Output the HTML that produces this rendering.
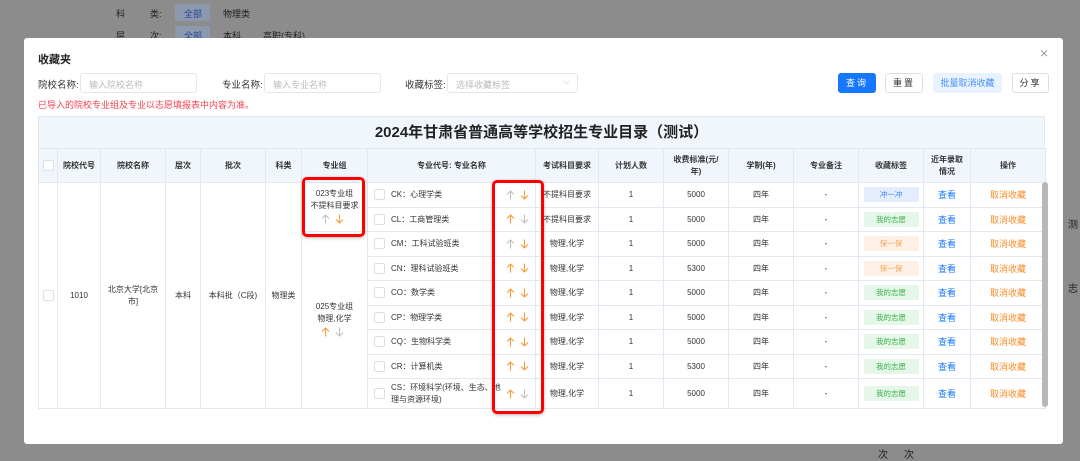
<!DOCTYPE html>
<html><head><meta charset="utf-8"><style>
*{margin:0;padding:0;box-sizing:border-box}
body{width:1080px;height:461px;overflow:hidden;background:#8c8c8c;font-family:"Liberation Sans","Noto Sans CJK SC",sans-serif;position:relative;color:#333}
.a{position:absolute;white-space:nowrap}
.bg{color:#1e1e1e;font-size:9px}
.modal{position:absolute;left:24px;top:38px;width:1039px;height:406px;background:#fff;border-radius:3px}
.inp{position:absolute;height:20px;border:1px solid #e4e6eb;border-radius:3px;font-size:9px;color:#bbb;padding:4px 8px;background:#fff}
.lab{position:absolute;font-size:9.5px;color:#333}
.btn{position:absolute;height:20px;border:1px solid #dcdfe6;border-radius:3px;font-size:9px;text-align:center;line-height:18px;background:#fff;color:#333;letter-spacing:2px}
table{position:absolute;left:38px;top:148px;border-collapse:collapse;table-layout:fixed;font-size:8px;color:#333}
td,th{border:1px solid #e3e8f0;text-align:center;vertical-align:middle;padding:0}
th{background:#f1f6fd;height:34px;font-size:8px;color:#333;line-height:12px;font-weight:bold}
td{font-weight:normal;height:24.5px}
.cb{display:inline-block;width:11px;height:11px;border:1px solid #dcdfe6;border-radius:2px;vertical-align:middle;background:#fff}
.tag{display:inline-block;width:55px;height:15px;line-height:15px;font-size:7.5px}
.t1{background:#e3edfd;color:#4a8cf7}.t2{background:#e6f7e9;color:#3bb34a}.t3{background:#fdf0e4;color:#f5a35a}
.blue{color:#1677ff;font-size:9px}.org{color:#fa8c2a;font-size:9px}
.maj{text-align:left;padding-left:6px;position:relative}
.maj .cb{margin-right:6px}
.ar{position:absolute;left:138px;top:50%;transform:translateY(-50%);height:10px;line-height:0}
.ar svg,.ga svg{width:9px;height:10px;margin-right:5px;vertical-align:middle}
.ga{display:inline-block;line-height:0;margin-top:2px}
.o{stroke:#fa9a3a}.g{stroke:#c0c0c0}
.red{position:absolute;border:3px solid #f00;border-radius:5px;box-shadow:0 1px 3px rgba(0,0,0,.3)}
</style></head><body>
<svg width="0" height="0" style="position:absolute"><defs>
<symbol id="u" viewBox="0 0 9 10"><path d="M4.5 9.5V1M1 4.5L4.5 1 8 4.5" fill="none" stroke-width="1.1"/></symbol>
<symbol id="d" viewBox="0 0 9 10"><path d="M4.5 0.5V9M1 5.5L4.5 9 8 5.5" fill="none" stroke-width="1.1"/></symbol>
</defs></svg>
<div class="a bg" style="left:116px;top:7px">科&nbsp;&nbsp;&nbsp;&nbsp;&nbsp;&nbsp;&nbsp;&nbsp;&nbsp;&nbsp;类:</div>
<div class="a" style="left:175px;top:4px;width:35px;height:17px;background:#8c98ae"></div>
<div class="a bg" style="left:184px;top:7px;color:#254a90">全部</div>
<div class="a bg" style="left:223px;top:7px">物理类</div>
<div class="a bg" style="left:116px;top:29px">层&nbsp;&nbsp;&nbsp;&nbsp;&nbsp;&nbsp;&nbsp;&nbsp;&nbsp;&nbsp;次:</div>
<div class="a" style="left:175px;top:26px;width:35px;height:12px;background:#8c98ae"></div>
<div class="a bg" style="left:184px;top:29px;color:#254a90">全部</div>
<div class="a bg" style="left:223px;top:29px">本科</div>
<div class="a bg" style="left:263px;top:29px">高职(专科)</div>
<div class="a bg" style="left:1068px;top:216px;font-size:10px">测</div>
<div class="a bg" style="left:1068px;top:280px;font-size:10px">志</div>
<div class="a bg" style="left:878px;top:446px;font-size:10px">次</div>
<div class="a bg" style="left:904px;top:446px;font-size:10px">次</div>

<div class="modal"></div>
<div class="a" style="left:38px;top:51px;font-size:11px;font-weight:bold;color:#222">收藏夹</div>
<div class="a" style="left:1040px;top:45px;font-size:14px;color:#999">×</div>
<div class="lab" style="left:38px;top:77px">院校名称:</div>
<div class="inp" style="left:80px;top:73px;width:117px">输入院校名称</div>
<div class="lab" style="left:222px;top:77px">专业名称:</div>
<div class="inp" style="left:264px;top:73px;width:117px">输入专业名称</div>
<div class="lab" style="left:405px;top:77px">收藏标签:</div>
<div class="inp" style="left:447px;top:73px;width:131px">选择收藏标签<span style="position:absolute;right:7px;top:2px;color:#bbb">⌵</span></div>
<div class="btn" style="left:838px;top:73px;width:38px;background:#1677ff;border-color:#1677ff;color:#fff">查询</div>
<div class="btn" style="left:885px;top:73px;width:38px">重置</div>
<div class="btn" style="left:933px;top:73px;width:69px;background:#e8f3ff;border-color:#e8f3ff;color:#4a90f5;letter-spacing:0">批量取消收藏</div>
<div class="btn" style="left:1012px;top:73px;width:37px">分享</div>
<div class="a" style="left:38px;top:98px;font-size:9px;color:#f5414d">已导入的院校专业组及专业以志愿填报表中内容为准。</div>

<div class="a" style="left:38px;top:116px;width:1007px;height:33px;background:#f1f6fd;border:1px solid #e3e8f0;font-size:15px;font-weight:bold;color:#222;text-align:center;line-height:31px">2024年甘肃省普通高等学校招生专业目录（测试）</div>

<table>
<colgroup><col style="width:19px"><col style="width:43px"><col style="width:65px"><col style="width:35px"><col style="width:65px"><col style="width:36px"><col style="width:66px"><col style="width:168px"><col style="width:63px"><col style="width:65px"><col style="width:65px"><col style="width:65px"><col style="width:65px"><col style="width:65px"><col style="width:47px"><col style="width:75px"></colgroup>
<tr><th><span class="cb"></span></th><th>院校代号</th><th>院校名称</th><th>层次</th><th>批次</th><th>科类</th><th>专业组</th><th>专业代号: 专业名称</th><th>考试科目要求</th><th>计划人数</th><th>收费标准(元/<br>年)</th><th>学制(年)</th><th>专业备注</th><th>收藏标签</th><th>近年录取<br>情况</th><th>操作</th></tr>
<tr><td rowspan="9"><span class="cb"></span></td><td rowspan="9">1010</td><td rowspan="9" style="line-height:12px">北京大学[北京<br>市]</td><td rowspan="9">本科</td><td rowspan="9">本科批（C段)</td><td rowspan="9">物理类</td>
<td rowspan="2" style="line-height:12px">023专业组<br>不提科目要求<br><span class="ga"><svg class="g"><use href="#u"/></svg><svg class="o"><use href="#d"/></svg></span></td>
<td class="maj"><span class="cb"></span>CK：心理学类<span class="ar"><svg class="g"><use href="#u"/></svg><svg class="o"><use href="#d"/></svg></span></td><td>不提科目要求</td><td>1</td><td>5000</td><td>四年</td><td>-</td><td><span class="tag t1">冲一冲</span></td><td class="blue">查看</td><td class="org">取消收藏</td></tr>
<tr><td class="maj"><span class="cb"></span>CL：工商管理类<span class="ar"><svg class="o"><use href="#u"/></svg><svg class="g"><use href="#d"/></svg></span></td><td>不提科目要求</td><td>1</td><td>5000</td><td>四年</td><td>-</td><td><span class="tag t2">我的志愿</span></td><td class="blue">查看</td><td class="org">取消收藏</td></tr>
<tr><td rowspan="7" style="line-height:12px">025专业组<br>物理,化学<br><span class="ga"><svg class="o"><use href="#u"/></svg><svg class="g"><use href="#d"/></svg></span></td>
<td class="maj"><span class="cb"></span>CM：工科试验班类<span class="ar"><svg class="g"><use href="#u"/></svg><svg class="o"><use href="#d"/></svg></span></td><td>物理,化学</td><td>1</td><td>5000</td><td>四年</td><td>-</td><td><span class="tag t3">保一保</span></td><td class="blue">查看</td><td class="org">取消收藏</td></tr>
<tr><td class="maj"><span class="cb"></span>CN：理科试验班类<span class="ar"><svg class="o"><use href="#u"/></svg><svg class="o"><use href="#d"/></svg></span></td><td>物理,化学</td><td>1</td><td>5300</td><td>四年</td><td>-</td><td><span class="tag t3">保一保</span></td><td class="blue">查看</td><td class="org">取消收藏</td></tr>
<tr><td class="maj"><span class="cb"></span>CO：数学类<span class="ar"><svg class="o"><use href="#u"/></svg><svg class="o"><use href="#d"/></svg></span></td><td>物理,化学</td><td>1</td><td>5000</td><td>四年</td><td>-</td><td><span class="tag t2">我的志愿</span></td><td class="blue">查看</td><td class="org">取消收藏</td></tr>
<tr><td class="maj"><span class="cb"></span>CP：物理学类<span class="ar"><svg class="o"><use href="#u"/></svg><svg class="o"><use href="#d"/></svg></span></td><td>物理,化学</td><td>1</td><td>5000</td><td>四年</td><td>-</td><td><span class="tag t2">我的志愿</span></td><td class="blue">查看</td><td class="org">取消收藏</td></tr>
<tr><td class="maj"><span class="cb"></span>CQ：生物科学类<span class="ar"><svg class="o"><use href="#u"/></svg><svg class="o"><use href="#d"/></svg></span></td><td>物理,化学</td><td>1</td><td>5000</td><td>四年</td><td>-</td><td><span class="tag t2">我的志愿</span></td><td class="blue">查看</td><td class="org">取消收藏</td></tr>
<tr><td class="maj"><span class="cb"></span>CR：计算机类<span class="ar"><svg class="o"><use href="#u"/></svg><svg class="o"><use href="#d"/></svg></span></td><td>物理,化学</td><td>1</td><td>5300</td><td>四年</td><td>-</td><td><span class="tag t2">我的志愿</span></td><td class="blue">查看</td><td class="org">取消收藏</td></tr>
<tr><td class="maj" style="height:30px;line-height:12px"><span class="cb" style="position:absolute;left:6px;top:9px"></span><div style="padding-left:17px">CS：环境科学(环境、生态、地<br>理与资源环境)</div><span class="ar"><svg class="o"><use href="#u"/></svg><svg class="g"><use href="#d"/></svg></span></td><td>物理,化学</td><td>1</td><td>5000</td><td>四年</td><td>-</td><td><span class="tag t2">我的志愿</span></td><td class="blue">查看</td><td class="org">取消收藏</td></tr>
</table>
<div class="a" style="left:1042px;top:182px;width:6px;height:225px;background:#b8b8b8;border-radius:3px"></div>
<div class="red" style="left:302px;top:177px;width:63px;height:60px"></div>
<div class="red" style="left:492px;top:180px;width:52px;height:234px"></div>
</body></html>
